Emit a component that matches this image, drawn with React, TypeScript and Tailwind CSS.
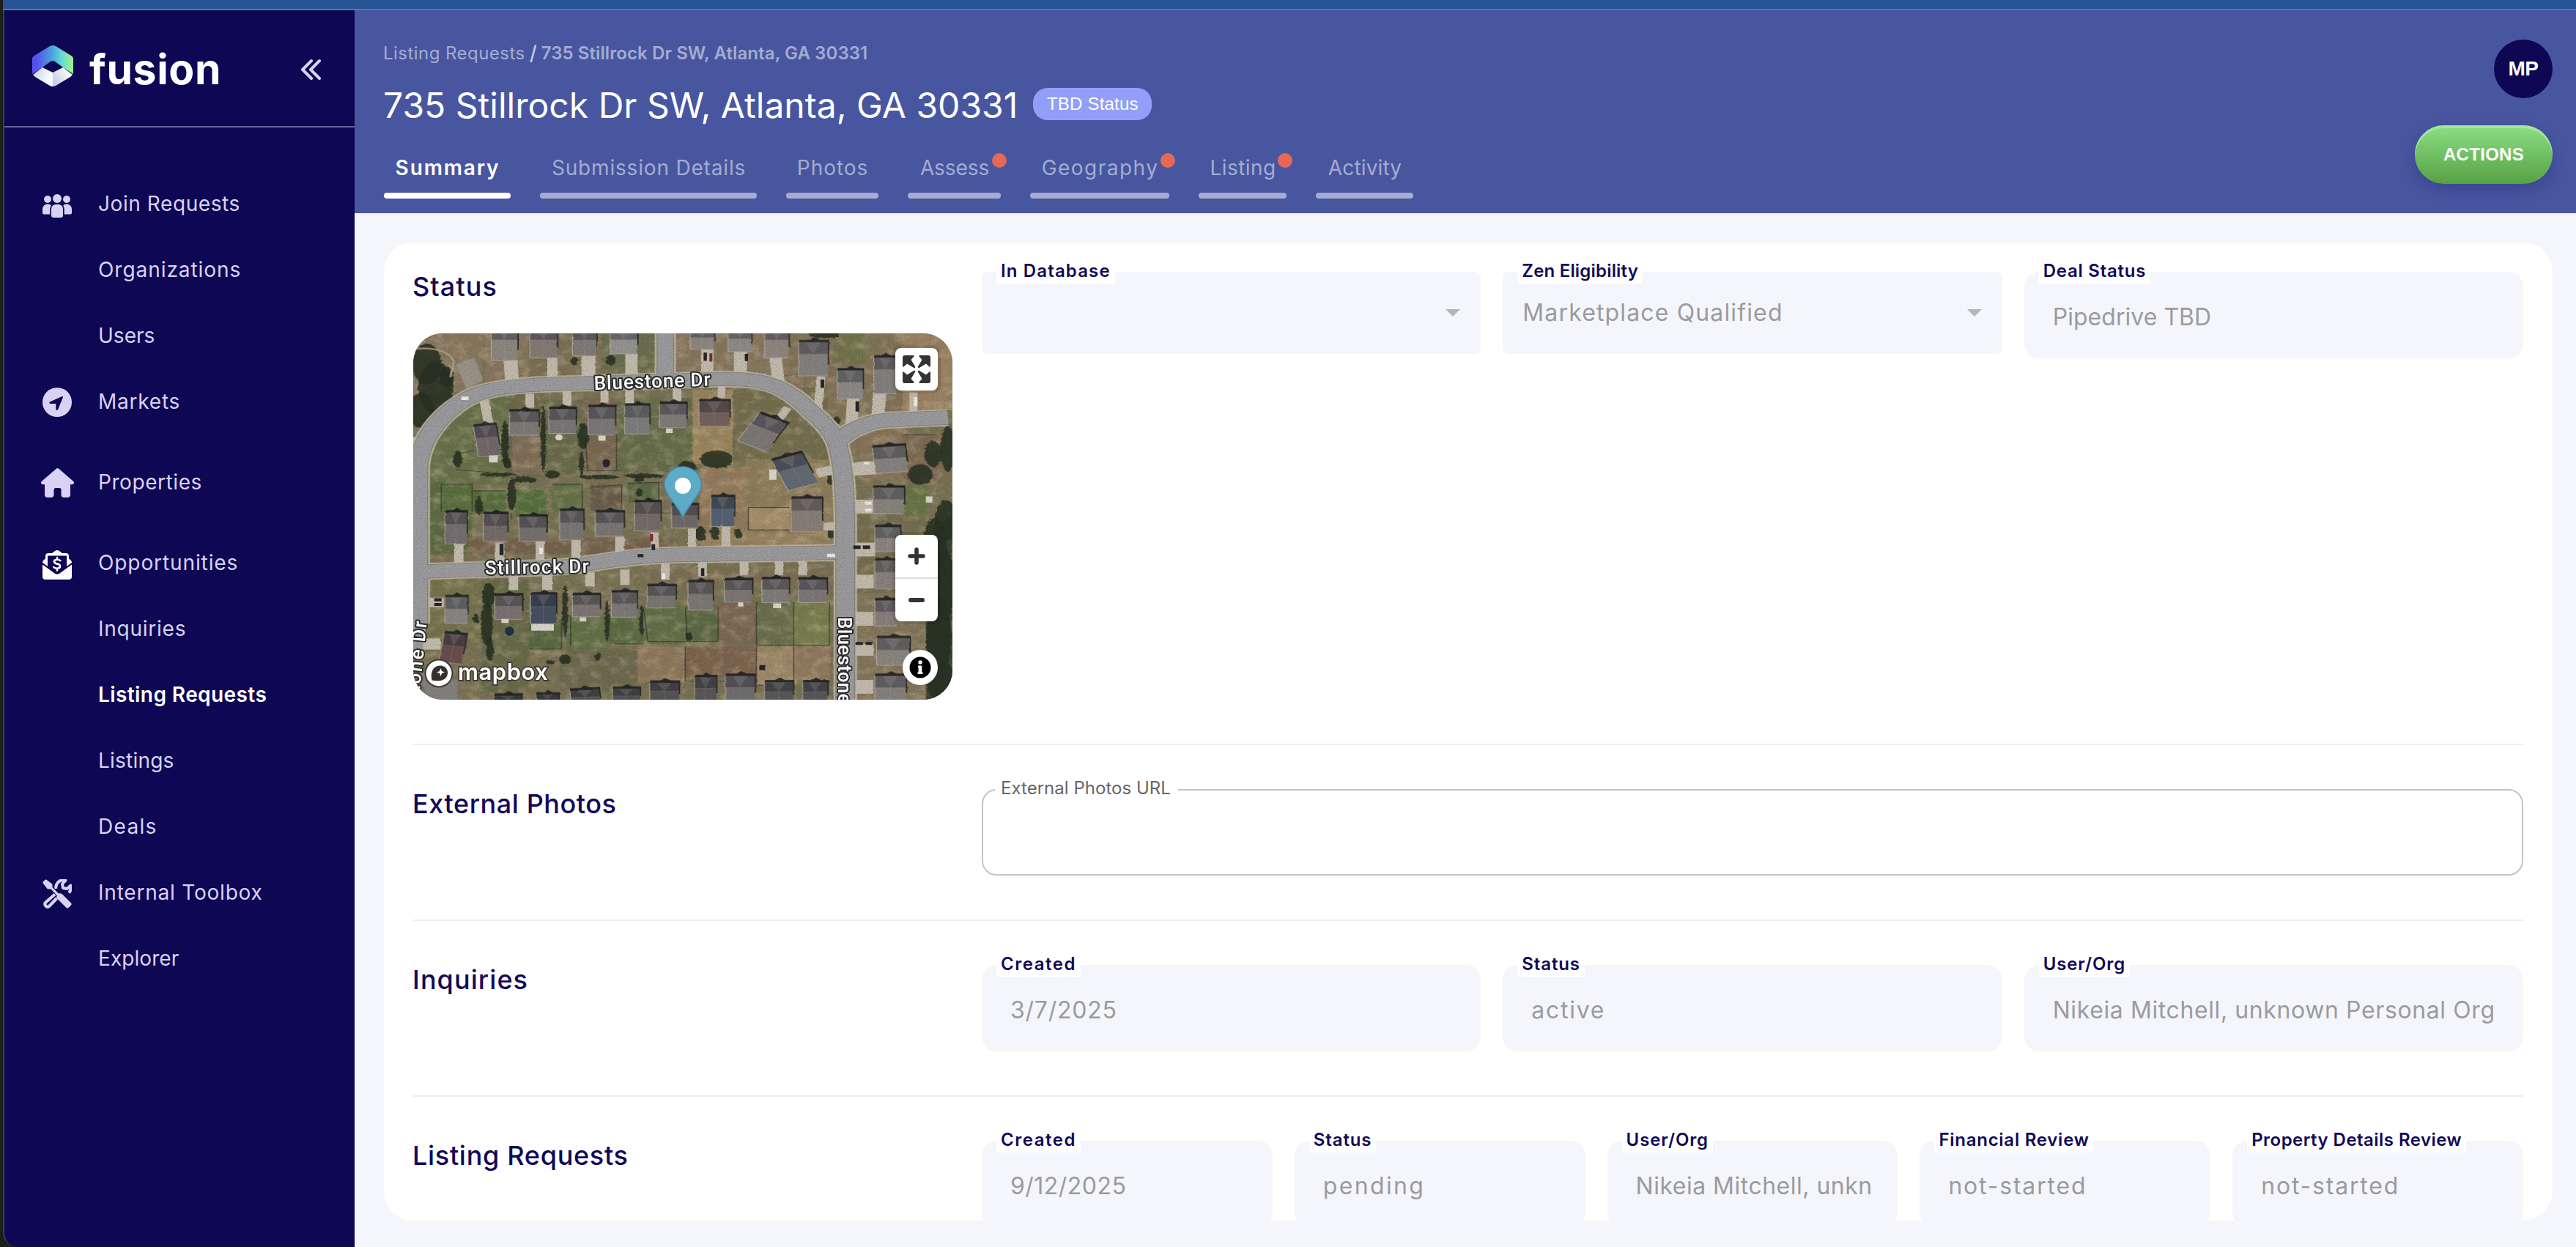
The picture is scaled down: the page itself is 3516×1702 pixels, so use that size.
import type { ReactNode } from "react";

/* ---------- icons ---------- */

function FusionMark() {
  return (
    <svg width="56" height="56" viewBox="0 0 56 56">
      <defs>
        <linearGradient id="fm-top" x1="0" x2="1" y1="0" y2="0">
          <stop offset="0.1" stopColor="#5850ee" />
          <stop offset="0.45" stopColor="#4d9ade" />
          <stop offset="0.7" stopColor="#5fd8dc" />
          <stop offset="0.95" stopColor="#9df08f" />
        </linearGradient>
        <linearGradient id="fm-l" x1="0" x2="1" y1="0" y2="0.5">
          <stop offset="0" stopColor="#c3cce2" />
          <stop offset="0.8" stopColor="#f7f9fd" />
        </linearGradient>
        <linearGradient id="fm-r" x1="0" x2="1" y1="0.6" y2="0">
          <stop offset="0" stopColor="#c6d0e6" />
          <stop offset="0.8" stopColor="#ffffff" />
        </linearGradient>
      </defs>
      <path d="M1 40 14 30 28 37V56q-2 0-4-1L4 43Z" fill="url(#fm-l)" />
      <path d="M55 40 42 30 28 37V56q2 0 4-1L52 43Z" fill="url(#fm-r)" />
      <path
        d="M0 18q0-2 2-3.500L24 1q4-2 8 0l22 13.500q2 1.500 2 3.500V39L42 30 32 22.500q-4-3-8 0L14 30 0 39Z"
        fill="url(#fm-top)"
      />
    </svg>
  );
}

function CollapseIcon() {
  return (
    <svg width="28" height="30" viewBox="0 0 28 30" fill="none" stroke="#d9d2f4" strokeWidth="4" strokeLinecap="round" strokeLinejoin="round">
      <path d="M15 3 3 15l12 12M26 3 14 15l12 12" />
    </svg>
  );
}

function UsersIcon() {
  return (
    <svg width="40" height="32" viewBox="0 0 40 32" fill="#d9d2f4">
      <circle cx="7" cy="7" r="5" />
      <circle cx="33" cy="7" r="5" />
      <circle cx="20" cy="6" r="6" />
      <path d="M7 13.500c2 0 3.600.7 4.800 2C10.600 17.500 10.300 19 10.300 21v6.500H2a2 2 0 0 1-2-2v-5a7 7 0 0 1 7-7ZM33 13.500c-2 0-3.600.7-4.800 2 1.200 2 1.500 3.500 1.500 5.500v6.500H38a2 2 0 0 0 2-2v-5a7 7 0 0 0-7-7Z" />
      <path d="M18 14h4a6 6 0 0 1 6 6v9a3 3 0 0 1-3 3H15a3 3 0 0 1-3-3v-9a6 6 0 0 1 6-6Z" />
    </svg>
  );
}

function MarketsIcon() {
  return (
    <svg width="40" height="40" viewBox="0 0 40 40">
      <circle cx="20" cy="20" r="20" fill="#d9d2f4" />
      <path d="M10 19.500 26.300 12.200q2.200-.8 1.500 1.500L21 30.200q-2.400 2-2.700-.8V22H11q-3-.6-1-2.500Z" fill="#0e0753" />
    </svg>
  );
}

function HomeIcon() {
  return (
    <svg width="45" height="40" viewBox="0 0 45 40">
      <path
        d="M20.800.7q1.700-1.400 3.400 0L44.200 18q1.300 1.300.6 2.800-.6 1.400-2.300 1.400H40V36q0 4-4 4h-4.500q-4 0-4-4v-6.500q0-2.500-2.500-2.500h-5q-2.500 0-2.500 2.500V36q0 4-4 4H9q-4 0-4-4V22.200H2.500Q.8 22.200.2 20.800-.5 19.300.8 18Z"
        fill="#d9d2f4"
      />
    </svg>
  );
}

function EnvelopeIcon() {
  return (
    <svg width="40" height="40" viewBox="0 0 40 40">
      <g fill="#ffffff">
        <path d="M4 8q0-4 4-4h5l4-3q3-2 6 0l4 3h5q4 0 4 4v3.500l2.500 2Q40 15 40 16.500V17l-7 5V8.500q0-1-1-1H8q-1 0-1 1V22l-7-5v-.5Q0 15 1.500 13.500L4 11.500Z" />
        <path d="M0 19.500 16.500 31.500q3.500 2.500 7 0L40 19.500V36q0 4-4 4H4q-4 0-4-4Z" />
      </g>
      <path d="M24.300 14.200q-1.500-1.400-4.300-1.400-4 0-4 2.800 0 2.300 4 3t4 3.200q0 3-4 3-3 0-4.600-1.600M20 10v2.800M20 24.800v2.800" fill="none" stroke="#ffffff" strokeWidth="2.600" strokeLinecap="round" />
    </svg>
  );
}

function ToolsIcon() {
  return (
    <svg width="40" height="40" viewBox="0 0 40 40">
      <path d="M17 20.500 4.500 31.500q-2.500 2.500 0 5t5 0L20 25.500" fill="none" stroke="#d9d2f4" strokeWidth="4.200" />
      <path d="M18.500 13q-1-5 3-9t10-2.300L27 6.500l1 5.500 5.500 1 5-4.500q1.500 6-2.500 10" fill="none" stroke="#d9d2f4" strokeWidth="4" strokeLinejoin="round" />
      <path
        d="M5.500.7 12.500 6q1 .8 1 2v3.200l8.300 8.300q3-1 5 .8L38.600 32q2 2 0 4l-2.500 2.500q-2 2-4 0L20.500 27q-1.900-2.200-.8-5L11.400 13.600H8q-1.300 0-2-1L.7 5.500Q0 4.300.9 3.300L3.300.9Q4.300 0 5.500.7Z"
        fill="#d9d2f4"
        stroke="#0e0753"
        strokeWidth="1"
        paintOrder="stroke"
      />
    </svg>
  );
}

/* ---------- sidebar ---------- */

type NavItem = { label: string; cls: string; icon?: ReactNode; iconCls?: string };

const NAV: NavItem[] = [
  { label: "Join Requests", cls: "tracking-[0.58px]", icon: <UsersIcon />, iconCls: "pt-[5px]" },
  { label: "Organizations", cls: "tracking-[0.95px]" },
  { label: "Users", cls: "tracking-[0.03px]" },
  { label: "Markets", cls: "tracking-[0.77px]", icon: <MarketsIcon />, iconCls: "pt-[2px]" },
  { label: "Properties", cls: "mt-5 tracking-[0.57px]", icon: <HomeIcon />, iconCls: "pt-[2px]" },
  { label: "Opportunities", cls: "mt-5 tracking-[0.9px]", icon: <EnvelopeIcon />, iconCls: "pt-[5px]" },
  { label: "Inquiries", cls: "tracking-[0.75px]" },
  { label: "Listing Requests", cls: "font-semibold text-white tracking-[0.42px]" },
  { label: "Listings", cls: "tracking-[0.22px]" },
  { label: "Deals", cls: "tracking-[1.32px]" },
  { label: "Internal Toolbox", cls: "tracking-[0.79px]", icon: <ToolsIcon />, iconCls: "pt-[3px]" },
  { label: "Explorer", cls: "tracking-[0.07px]" },
];

function Sidebar() {
  return (
    <aside className="flex w-[480px] shrink-0 flex-col rounded-bl-[20px] border-l-2 border-[#3d3770] bg-[#0e0753]">
      <div className="flex h-[160px] items-center border-b-2 border-[#69659a] pl-[38px] pr-[46px]">
        <div className="pb-[6px]">
          <FusionMark />
        </div>
        <span className="ml-[22px] pt-1 text-[57px] leading-[64px] font-bold tracking-[0.7px] text-white">fusion</span>
        <span className="ml-auto pt-[4px]">
          <CollapseIcon />
        </span>
      </div>
      <nav className="flex flex-col pt-[59px] text-[28px] text-[#d9d2f4]">
        {NAV.map((n) => (
          <div key={n.label} className={`flex h-[90px] items-center ${n.cls}`}>
            <div className={`ml-[46px] mr-[30px] flex w-[52px] justify-center ${n.iconCls ?? ""}`}>{n.icon}</div>
            <span>{n.label}</span>
          </div>
        ))}
      </nav>
    </aside>
  );
}

/* ---------- header ---------- */

const TABS = [
  { label: "Summary", cls: "w-[173px] tracking-[1.84px] font-semibold text-white", active: true, dot: false },
  { label: "Submission Details", cls: "w-[296px] tracking-[0.82px]", active: false, dot: false },
  { label: "Photos", cls: "w-[126px] tracking-[0.94px]", active: false, dot: false },
  { label: "Assess", cls: "w-[127px] tracking-[-0.09px]", active: false, dot: true },
  { label: "Geography", cls: "w-[190px] tracking-[1.47px]", active: false, dot: true },
  { label: "Listing", cls: "w-[120px] tracking-[0.45px]", active: false, dot: true },
  { label: "Activity", cls: "w-[133px] tracking-[0.14px]", active: false, dot: false },
];

function Header() {
  return (
    <header className="flex h-[277px] justify-between bg-[#4856a0] pl-[40px] pr-8">
      <div className="pt-[41px]">
        <div className="-ml-px flex h-9 items-center whitespace-pre text-[24px] text-[#a4acd0]">
          <span className="tracking-[0.46px]">Listing Requests</span>
          <span className="ml-[6px] text-[27px] leading-9 font-medium text-[#c3c9e2]">/</span>
          <span className="ml-[6px] font-semibold tracking-[0.09px]">735 Stillrock Dr SW, Atlanta, GA 30331</span>
        </div>
        <div className="-ml-px mt-[17px] flex h-[72px] items-center">
          <h1 className="text-[48px] leading-[72px] tracking-[0.02px] text-white">735 Stillrock Dr SW, Atlanta, GA 30331</h1>
          <span className="mb-[5px] ml-[21px] flex h-[44px] w-[162px] items-center justify-center rounded-[20px] bg-[#929ef7] font-['Liberation_Sans',sans-serif] text-[24px] tracking-[0.2px] text-white">
            TBD Status
          </span>
        </div>
        <div className="mt-[29px] flex gap-10 text-[28px] text-[#a4acd0]">
          {TABS.map((t) => (
            <div key={t.label} className={`relative flex flex-col ${t.cls}`}>
              <span className="h-10 pl-px text-center leading-10">{t.label}</span>
              <span className={`mt-[14px] h-2 rounded-full ${t.active ? "bg-white" : "bg-[#a4acd0]"}`} />
              {t.dot && <span className="absolute -right-2 top-0 size-5 rounded-full bg-[#e36a57]" />}
            </div>
          ))}
        </div>
      </div>
      <div className="flex flex-col items-end pt-10 font-['Liberation_Sans',sans-serif] font-bold text-white">
        <div className="flex size-20 items-center justify-center rounded-full bg-[#0e0753] text-[28px] tracking-[-0.5px]">MP</div>
        <button className="mt-[37px] flex h-20 w-[188px] items-center justify-center rounded-full bg-gradient-to-b from-[#8bdf84] to-[#58a144] text-[24px] tracking-[0.3px] shadow-[inset_0_4px_0_#a6e49c,0_8px_20px_rgba(14,7,83,0.22)]">
          ACTIONS
        </button>
      </div>
    </header>
  );
}

/* ---------- map ---------- */

type House = [number, number, number, number, string?, number?];

const HOUSES: House[] = [
  [262, 50, 72, 125, "#8d867f"], [368, 50, 75, 115, "#847a74"], [485, 50, 66, 108, "#827a76"], [588, 50, 75, 100, "#93928e"],
  [808, 50, 66, 82, "#8d867f"], [912, 50, 64, 92, "#8d8984"], [1012, 50, 66, 115, "#8d867f"], [1106, 105, 80, 130, "#837f7d"],
  [1212, 215, 70, 110, "#8b8885"], [1312, 165, 62, 140, "#847f7c"],
  [312, 375, 80, 92, "#7e7977"], [420, 365, 74, 95, "#7a7674"], [528, 358, 74, 108, "#7b7776"], [628, 352, 68, 110, "#7d7e7b"],
  [724, 345, 74, 92, "#7e7a78"], [832, 335, 84, 97, "#75615c"], [220, 430, 62, 118, "#736769", -7],
  [962, 395, 88, 122, "#7b7776", 29], [1052, 548, 88, 124, "#646972", -21],
  [1312, 512, 90, 100, "#85817f", -5], [1310, 672, 85, 100, "#87827c"], [1315, 825, 70, 95, "#8a8581"], [1315, 955, 60, 110, "#87807c"],
  [1315, 1110, 60, 100, "#867f7b"], [1320, 1258, 90, 105, "#8a847f"], [1315, 1405, 85, 100, "#86807c"],
  [135, 768, 60, 122, "#746d6f"], [240, 775, 66, 105, "#736b69"], [338, 785, 76, 95, "#756f6e"], [450, 762, 65, 112, "#797472"],
  [548, 768, 78, 92, "#797473"], [655, 728, 72, 112, "#766b67"], [757, 740, 72, 88, "#6e6968"], [865, 708, 64, 114, "#556070"],
  [1085, 715, 85, 128, "#897d78"],
  [135, 1098, 62, 102, "#878583"], [272, 1092, 75, 92, "#7a7270"], [370, 1088, 70, 112, "#475061"], [485, 1090, 75, 84, "#7d7572"],
  [592, 1080, 70, 96, "#7d7875"], [690, 1055, 78, 84, "#7a7471"], [802, 1040, 68, 108, "#7d7772"], [902, 1032, 76, 85, "#7c7673"],
  [1005, 1028, 74, 90, "#7e7a77"], [1105, 1030, 78, 88, "#7c7776"], [125, 1242, 62, 112, "#694e4c", 8],
  [270, 1482, 75, 40, "#444343"], [385, 1478, 62, 40, "#444343"], [480, 1460, 80, 60, "#555351", -4], [595, 1455, 75, 60, "#525151"],
  [697, 1432, 80, 70, "#555353"], [820, 1410, 60, 95, "#585656"], [905, 1405, 80, 100, "#706d6d"], [1012, 1430, 78, 80, "#585858"],
  [1117, 1430, 68, 80, "#585657"],
];

/* lots: x, y, width, height, ground colour */
const LOTS: [number, number, number, number, string][] = [
  [48, 70, 190, 250, "#89785f"], [245, 70, 120, 190, "#88765f"], [365, 70, 200, 190, "#7c7155"], [565, 70, 150, 140, "#6a6e4d"],
  [760, 70, 350, 160, "#87775d"], [1080, 70, 330, 380, "#817358"], [1200, 70, 90, 120, "#73734c"], [1390, 70, 140, 300, "#9a8164"],
  [90, 300, 215, 360, "#676f48"], [305, 300, 100, 330, "#6c674a"], [320, 470, 85, 150, "#806d57"], [405, 330, 110, 290, "#696a4b"],
  [515, 320, 95, 290, "#7a6751"], [608, 320, 215, 290, "#666c48"], [815, 290, 115, 290, "#9c865f"], [925, 280, 260, 300, "#736d4e"],
  [960, 560, 250, 340, "#8e7d5a"], [835, 590, 130, 310, "#937a5b"],
  [90, 650, 120, 280, "#5b6940"], [125, 655, 85, 110, "#586e3d"], [212, 680, 90, 90, "#576c3c"], [330, 680, 85, 105, "#566e3d"],
  [428, 655, 85, 110, "#657046"], [535, 660, 85, 100, "#685b48"], [637, 650, 85, 80, "#5c6842"], [200, 870, 560, 60, "#75624d"],
  [968, 750, 112, 85, "#a48e69"], [840, 850, 370, 55, "#998360"],
  [85, 1030, 150, 250, "#74724d"], [235, 1030, 130, 440, "#676b4a"], [365, 1180, 90, 120, "#586a42"], [470, 1170, 110, 130, "#626f46"],
  [585, 1170, 95, 110, "#5a6a43"], [680, 1130, 115, 150, "#626e46"], [795, 1130, 90, 140, "#5b6744"], [885, 1110, 105, 170, "#7a6852"],
  [990, 1110, 100, 175, "#6b6e4d"], [1092, 1110, 100, 175, "#787e50"], [665, 1290, 130, 140, "#8f785b"], [795, 1290, 195, 120, "#7b634e"],
  [990, 1290, 110, 150, "#a0896a"], [1092, 1290, 100, 130, "#917a5f"], [450, 1300, 210, 160, "#6d694d"], [700, 985, 510, 60, "#7c6e53"],
  [1270, 440, 130, 200, "#867359"], [1390, 465, 110, 200, "#7e6a51"], [1390, 660, 70, 180, "#687344"], [1260, 780, 200, 300, "#746d50"],
  [1260, 1080, 200, 420, "#83745a"],
];

const DRIVES: [number, number, number, number, number?][] = [
  [298, 176, 38, 82, -3], [416, 165, 28, 85], [510, 158, 38, 92], [630, 150, 34, 90], [838, 132, 34, 88], [928, 140, 36, 90],
  [1030, 165, 34, 110, -5], [1150, 238, 24, 160, 4], [1236, 320, 34, 120, 3], [1308, 300, 36, 95, 3], [1410, 300, 22, 80],
  [236, 330, 26, 95, -8], [356, 305, 24, 55], [458, 292, 24, 60], [562, 290, 22, 50], [630, 285, 24, 62], [760, 280, 24, 55], [884, 265, 20, 55],
  [160, 890, 26, 80], [272, 885, 26, 80], [384, 880, 24, 75], [482, 875, 26, 78], [602, 862, 26, 80], [700, 845, 22, 80], [802, 830, 22, 82],
  [894, 822, 24, 85], [1240, 570, 78, 52, -4], [1250, 718, 60, 54], [1256, 885, 60, 54], [1252, 1010, 60, 54], [1256, 1155, 55, 54],
  [1256, 1280, 55, 46], [1256, 1420, 55, 54], [1155, 590, 48, 36, -18], [1174, 806, 50, 32], [1050, 355, 24, 60, 28],
  [310, 1010, 26, 60], [402, 1010, 28, 60], [520, 1000, 26, 55], [616, 990, 26, 60], [728, 965, 24, 65], [830, 955, 24, 62],
  [944, 950, 24, 62], [1040, 950, 24, 62], [1105, 950, 24, 62], [70, 1100, 62, 36], [60, 1258, 62, 44], [48, 475, 28, 36],
];

const TREES: [number, number, number, number][] = [
  [85, 190, 40, 80], [110, 280, 48, 100], [70, 370, 34, 70], [140, 240, 20, 40], [880, 560, 45, 34], [800, 590, 24, 22],
  [515, 470, 16, 50], [405, 480, 7, 130], [510, 580, 7, 50], [300, 500, 10, 90], [318, 700, 12, 60], [430, 620, 20, 16], [350, 640, 36, 12],
  [560, 630, 55, 9], [680, 625, 55, 9], [228, 740, 10, 36], [170, 560, 13, 32], [306, 575, 11, 22], [280, 620, 50, 7],
  [255, 1090, 18, 46], [250, 1200, 16, 85], [258, 1300, 10, 46], [465, 1150, 8, 100], [580, 1190, 7, 80], [675, 1190, 6, 60],
  [1480, 900, 34, 110], [1500, 1050, 34, 150], [1490, 1250, 34, 170], [1500, 1430, 40, 80], [1475, 540, 24, 50], [1440, 620, 34, 40],
  [1515, 520, 20, 90], [1510, 800, 30, 80], [836, 850, 14, 30], [876, 848, 12, 26], [940, 850, 9, 20], [1195, 640, 13, 20], [1195, 850, 11, 20],
  [465, 1340, 16, 20], [555, 1330, 10, 16], [425, 1352, 12, 8], [220, 1180, 9, 18], [590, 175, 14, 20], [490, 178, 11, 16], [1175, 75, 40, 14],
  [805, 1250, 9, 18], [1210, 410, 11, 16], [668, 690, 10, 16], [668, 638, 14, 14],
];

const FENCES =
  "M125 658H210V765M125 658V765M212 684H302M430 658H512V755M535 670 620 660V755M637 655 722 650V730M968 748H1080M968 748V836H1080M680 1140 692 1270H795M795 1140 800 1270H885V1140M990 1118V1285H1092V1118M1092 1285H1190V1118M795 1290V1425H990V1290M990 1440H1092M368 1300H455V1185M480 1170V1285M600 1280H678M168 540 215 525M165 600 300 618M520 470 527 605H606V465M730 770H752M318 795V770M200 775H212M1388 465H1480M1092 1290V1440";

const ROAD_LEFT = "M62 1200V600C62 470 150 330 250 295C330 265 450 268 560 262L900 248C1010 246 1060 275 1110 335C1160 400 1195 440 1212 500C1232 600 1232 700 1234 800V1500";
const ROAD_MID = "M50 1000C250 985 420 990 520 970C640 940 720 932 820 932L1225 924";
const ROAD_TOP = "M740 60V240";
const ROAD_RIGHT = "M1205 500C1240 450 1290 415 1350 408L1515 398";

function HouseShape({ h }: { h: House }) {
  const [x, y, w, d, fill = "#7d7875", rot = 0] = h;
  const t = Math.min(d * 0.45, 46);
  return (
    <g transform={`rotate(${rot} ${x + w / 2} ${y + d / 2})`}>
      <path d={`M${x + 2} ${y - 10}h${w * 0.35}l${w * 0.15} -9l${w * 0.2} 9h${w * 0.32}v${d * 0.75}h-8V${y}H${x}Z`} fill="#191a1f" opacity="0.85" />
      <rect x={x} y={y} width={w} height={d} fill={fill} />
      <rect x={x} y={y} width={w} height={t} fill="#22252d" opacity="0.38" />
      <path d={`M${x + w * 0.25} ${y}L${x + w * 0.5} ${y + t}L${x + w * 0.75} ${y}Z`} fill="#a7a6a3" opacity="0.22" />
      <path d={`M${x} ${y + t}H${x + w}M${x + w / 2} ${y + t}V${y + d}`} stroke="#b1aba4" strokeWidth="1.500" opacity="0.35" />
      <path d={`M${x} ${y}V${y + d}H${x + w}`} fill="none" stroke="#cbc5bb" strokeWidth="2.500" opacity="0.6" />
    </g>
  );
}

function Satellite() {
  return (
    <svg className="block" width="736" height="500" viewBox="48 70 1480 1427" preserveAspectRatio="none">
      <defs>
        <filter id="rough" x="0" y="0" width="1" height="1">
          <feTurbulence type="fractalNoise" baseFrequency="0.09" numOctaves="3" seed="4" />
          <feDisplacementMap in="SourceGraphic" scale="12" />
        </filter>
        <filter id="rough2" x="0" y="0" width="1" height="1">
          <feTurbulence type="fractalNoise" baseFrequency="0.06" numOctaves="2" seed="8" />
          <feDisplacementMap in="SourceGraphic" scale="5" />
        </filter>
        <filter id="blotch" x="0" y="0" width="1" height="1">
          <feTurbulence type="fractalNoise" baseFrequency="0.022" numOctaves="4" seed="11" />
          <feColorMatrix values="0 0 0 0 0.16  0 0 0 0 0.17  0 0 0 0 0.1  1.6 0 0 0 -0.78" />
        </filter>
        <filter id="warm" x="0" y="0" width="1" height="1">
          <feTurbulence type="fractalNoise" baseFrequency="0.03" numOctaves="4" seed="29" />
          <feColorMatrix values="0 0 0 0 0.72  0 0 0 0 0.6  0 0 0 0 0.42  0 1.6 0 0 -0.74" />
        </filter>
        <filter id="grain" x="0" y="0" width="1" height="1">
          <feTurbulence type="fractalNoise" baseFrequency="0.3" numOctaves="2" seed="3" />
          <feColorMatrix values="0 0 0 0 0  0 0 0 0 0  0 0 0 0 0  1.5 0 0 0 -0.72" />
        </filter>
      </defs>
      <rect x="48" y="70" width="1480" height="1427" fill="#797154" />
      <g filter="url(#rough)">
        {LOTS.map(([x, y, w, h, c], i) => (
          <rect key={i} x={x} y={y} width={w} height={h} fill={c} />
        ))}
      </g>
      <rect x="48" y="70" width="1480" height="1427" filter="url(#warm)" opacity="0.5" />
      <rect x="48" y="70" width="1480" height="1427" filter="url(#blotch)" opacity="0.55" />
      <g filter="url(#rough)" fill="#262f22">
        {TREES.map(([x, y, rx, ry], i) => (
          <ellipse key={i} cx={x} cy={y} rx={rx} ry={ry} opacity="0.85" />
        ))}
      </g>
      <path d="M1480 820L1528 780V1497H1455V1000Z" fill="#2a3028" opacity="0.75" filter="url(#rough)" />
      <path d="M165 190L215 165L240 250L195 290Z" fill="#989288" />
      <path d="M55 130Q140 120 160 180L150 240" fill="none" stroke="#ad9f86" strokeWidth="6" />
      <path d="M60 1390L170 1420V1500H90Z" fill="#83807c" />
      <g fill="none" stroke="#bdb5a3">
        <path d={ROAD_LEFT} strokeWidth="64" />
        <path d="M62 1190 58 1320" strokeWidth="40" />
        <path d={ROAD_MID} strokeWidth="66" />
        <path d={ROAD_TOP} strokeWidth="58" />
        <path d={ROAD_RIGHT} strokeWidth="66" />
      </g>
      <g filter="url(#rough2)">
        {DRIVES.map(([x, y, w, h, r = 0], i) => (
          <rect key={i} x={x} y={y} width={w} height={h} fill="#c1b9ab" transform={`rotate(${r} ${x + w / 2} ${y + h / 2})`} />
        ))}
      </g>
      <g stroke="#7d756a" fill="none">
        <path d={ROAD_LEFT} strokeWidth="54" />
        <path d={ROAD_MID} strokeWidth="56" />
        <path d={ROAD_TOP} strokeWidth="48" />
        <path d={ROAD_RIGHT} strokeWidth="56" />
      </g>
      <g stroke="#9a9a9c" fill="none">
        <path d={ROAD_LEFT} strokeWidth="50" />
        <path d="M62 1190 58 1320" strokeWidth="32" />
        <path d={ROAD_MID} strokeWidth="52" />
        <path d={ROAD_TOP} strokeWidth="44" />
        <path d={ROAD_RIGHT} strokeWidth="52" />
      </g>
      <path d={FENCES} fill="none" stroke="#2a2822" strokeWidth="2.500" opacity="0.75" />
      <g filter="url(#rough2)">
        {HOUSES.map((h, i) => (
          <HouseShape key={i} h={h} />
        ))}
      </g>
      <g fill="#d8d4cb">
        <ellipse cx="448" cy="475" rx="10" ry="12" />
        <path d="M556 468h20v20h-20zM256 545h24v28h-24zM742 440h18v18h-18zM372 1202h62v26h-62zM1455 705h18v24h-18zM1036 1122h22v18h-22zM505 1176h18v16h-18zM290 1182h20v16h-20zM940 1118h14v16h-14zM1025 600h20v40h-20z" />
      </g>
      <g fill="#24262c">
        <ellipse cx="578" cy="576" rx="10" ry="16" />
        <ellipse cx="312" cy="1230" rx="12" ry="18" fill="#1f3142" />
        <path d="M1256 896h20v14h-20zM1282 896h20v14h-20zM106 1102h20v12h-20zM106 1120h20v12h-20zM285 890h11v44h-11zM702 892h10v22h-10zM1166 250h10v32h-10zM1262 335h10v40h-10zM838 985h9v30h-9zM664 930h16v12h-16zM1262 1272h20v12h-20zM1290 1272h18v12h-18zM845 145h9v32h-9zM958 150h9v28h-9zM998 1362h16v20h-16z" />
      </g>
      <path d="M861 148h8v32h-8zM698 852h8v28h-8z" fill="#7c2f2b" />
      <path d="M1422 318h10v36h-10zM394 905h10v24h-10zM1184 928h22v14h-22zM180 316h20v14h-20zM1288 725h18v12h-18zM1288 752h18v12h-18zM730 1005h10v22h-10zM1284 570h16v10h-16z" fill="#e8e8e6" />
      <rect x="48" y="70" width="1480" height="1427" filter="url(#grain)" opacity="0.3" />
    </svg>
  );
}

function MapOverlay() {
  return (
    <svg className="absolute inset-0" width="736" height="500" viewBox="0 0 736 500">
      <g fill="#ffffff" stroke="#2b2b2b" strokeWidth="4" paintOrder="stroke" strokeLinejoin="round" fontFamily="Roboto, sans-serif" fontWeight="500" fontSize="26">
        <text transform="translate(247 77) rotate(-2)" textLength="159">Bluestone Dr</text>
        <text transform="translate(98 329) rotate(-1)" textLength="142">Stillrock Dr</text>
        <text transform="translate(580 387) rotate(90)" textLength="152">Bluestone Dr</text>
        <text transform="translate(7 505) rotate(-84)" textLength="112">stone Dr</text>
      </g>
      <path d="M368 252C364 237 343 221 343 207a25 25 0 0 1 50 0c0 14-21 30-25 45Z" fill="#5eaac9" stroke="#4290ae" strokeWidth="1.500" />
      <circle cx="368" cy="208" r="11" fill="#ffffff" />
      <circle cx="35" cy="464" r="18.500" fill="#ffffff" stroke="#3d3a36" strokeWidth="2" />
      <path d="M25.500 473.500C23 463 27 453.500 36.500 453.500C46.500 453.500 49.500 463 45 469.500C40.500 475 33 475 25.500 473.500Z" fill="#34302c" />
      <path d="M37.500 457l1.500 4 4 1.500-4 1.500-1.500 4-1.500-4-4-1.500 4-1.500Z" fill="#ffffff" />
      <text x="61" y="473" textLength="123" fontFamily="Inter, sans-serif" fontWeight="600" fontSize="31" fill="#ffffff" stroke="#3d3a36" strokeWidth="3.500" paintOrder="stroke">
        mapbox
      </text>
    </svg>
  );
}

function MapCard() {
  return (
    <div className="relative h-[500px] w-[736px] overflow-hidden rounded-[40px]">
      <Satellite />
      <MapOverlay />
      <div className="absolute right-5 top-5 flex size-[58px] items-center justify-center rounded-lg bg-white shadow-[0_0_0_4px_rgba(0,0,0,0.1)]">
        <svg width="38" height="38" viewBox="0 0 38 38" fill="#333333">
          {[0, 90, 180, 270].map((a) => (
            <path key={a} transform={`rotate(${a} 19 19)`} d="M0 3q0-3 3-3h12q1 .5.500 1.500L11.500 6 17.500 16 16 17.500 6 11.500 1.500 15.500Q.5 16 0 15Z" />
          ))}
        </svg>
      </div>
      <div className="absolute bottom-[107px] right-5 flex w-[58px] flex-col overflow-hidden rounded-lg bg-white shadow-[0_0_0_4px_rgba(0,0,0,0.1)]">
        <div className="flex h-[60px] items-center justify-center border-b-2 border-[#dddddd]">
          <svg width="24" height="24" viewBox="0 0 24 24" stroke="#333333" strokeWidth="5.500" strokeLinecap="round">
            <path d="M12 3v18M3 12h18" />
          </svg>
        </div>
        <div className="flex h-[58px] items-center justify-center">
          <svg width="24" height="24" viewBox="0 0 24 24" stroke="#333333" strokeWidth="6" strokeLinecap="round">
            <path d="M4 12h16" />
          </svg>
        </div>
      </div>
      <div className="absolute bottom-5 right-5 flex size-12 items-center justify-center rounded-full bg-white">
        <svg width="30" height="30" viewBox="0 0 30 30">
          <circle cx="15" cy="15" r="14.500" fill="#000000" />
          <g fill="#ffffff">
            <circle cx="15" cy="8" r="2.700" />
            <path d="M12 12.500h5.300v9H18.500v2.500h-7v-2.500H12.600V15H12Z" />
          </g>
        </svg>
      </div>
    </div>
  );
}

/* ---------- form ---------- */

function FieldLabel({ text, cls }: { text: string; cls: string }) {
  return (
    <span className={`absolute -top-[18px] left-5 h-[34px] whitespace-nowrap bg-white px-[6px] text-[24px] leading-[34px] font-semibold text-[#110958] ${cls}`}>
      {text}
    </span>
  );
}

type FieldProps = { label: string; labelCls: string; value: string; valueCls?: string };

function Field({ label, labelCls, value, valueCls = "" }: FieldProps) {
  return (
    <div className="relative flex h-[118px] min-w-0 items-center rounded-[20px] bg-[#f5f6fc] pl-[39px] pt-[6px]">
      <FieldLabel text={label} cls={labelCls} />
      <span className={`whitespace-nowrap text-[32px] leading-[46px] text-[#9b9b9e] ${valueCls}`}>{value}</span>
    </div>
  );
}

function SelectField({ label, labelCls, value, valueCls = "" }: FieldProps) {
  return (
    <div className="relative flex h-[112px] min-w-0 items-center justify-between rounded-lg bg-[#f5f6fc] pl-[27px] pr-[28px]">
      <FieldLabel text={label} cls={labelCls} />
      <span className={`text-[32px] leading-[46px] text-[#9b9b9e] ${valueCls}`}>{value}</span>
      <svg width="20" height="10" viewBox="0 0 20 10">
        <path d="M0 0h20L10 10Z" fill="#b5b6bb" />
      </svg>
    </div>
  );
}

function Section({ title, titleCls, first, left, children }: { title: string; titleCls: string; first?: boolean; left?: ReactNode; children: ReactNode }) {
  return (
    <section className={`flex ${first ? "pb-[60px]" : "border-t-2 border-[#ebedf6] py-[60px]"}`}>
      <div className="flex w-[776px] shrink-0 flex-col">
        <h2 className={`-ml-px text-[36px] leading-10 font-medium text-[#110958] ${titleCls}`}>{title}</h2>
        {left}
      </div>
      {children}
    </section>
  );
}

export default function App() {
  return (
    <div className="flex h-[1702px] w-[3516px] flex-col overflow-hidden bg-[#1b2019] font-['Inter',sans-serif]">
      <div className="ml-1 h-[14px] shrink-0 border-b-2 border-[#507aab] bg-[#255394]" />
      <div className="ml-1 flex min-h-0 grow">
        <Sidebar />
        <main className="flex min-w-0 grow flex-col bg-[#f5f6fc]">
          <Header />
          <div className="mx-10 mr-8 mt-10 h-[1335px] overflow-hidden rounded-[40px] bg-white px-10 pt-10">
            <Section
              first
              title="Status"
              titleCls="tracking-[1.09px]"
              left={
                <div className="mt-11">
                  <MapCard />
                </div>
              }
            >
              <div className="grid h-[118px] grow grid-cols-3 items-start gap-[30px]">
                <SelectField label="In Database" labelCls="tracking-[1.14px]" value="" />
                <SelectField label="Zen Eligibility" labelCls="tracking-[0.19px]" value="Marketplace Qualified" valueCls="tracking-[1.14px]" />
                <Field label="Deal Status" labelCls="tracking-[0.75px]" value="Pipedrive TBD" valueCls="tracking-[0.04px]" />
              </div>
            </Section>

            <Section title="External Photos" titleCls="tracking-[0.56px]">
              <div className="relative h-[118px] grow rounded-[20px] border-2 border-[#c4c4c4]">
                <span className="absolute -top-[20px] left-4 h-[34px] bg-white pl-2 pr-[10px] text-[24px] leading-[34px] tracking-[0.02px] text-[#666666]">
                  External Photos URL
                </span>
              </div>
            </Section>

            <Section title="Inquiries" titleCls="tracking-[1.07px]">
              <div className="grid grow grid-cols-3 gap-[30px]">
                <Field label="Created" labelCls="tracking-[1.53px]" value="3/7/2025" valueCls="tracking-[0.76px]" />
                <Field label="Status" labelCls="tracking-[0.87px]" value="active" valueCls="tracking-[1.73px]" />
                <Field label="User/Org" labelCls="tracking-[0.88px]" value="Nikeia Mitchell, unknown Personal Org" valueCls="tracking-[0.6px]" />
              </div>
            </Section>

            <Section title="Listing Requests" titleCls="tracking-[0.7px]">
              <div className="grid grow grid-cols-5 gap-[30px]">
                <Field label="Created" labelCls="tracking-[1.53px]" value="9/12/2025" valueCls="tracking-[0.48px]" />
                <Field label="Status" labelCls="tracking-[0.87px]" value="pending" valueCls="tracking-[2.35px]" />
                <Field label="User/Org" labelCls="tracking-[0.88px]" value="Nikeia Mitchell, unkn" valueCls="tracking-[0.49px]" />
                <Field label="Financial Review" labelCls="tracking-[0.74px]" value="not-started" valueCls="tracking-[1.8px]" />
                <Field label="Property Details Review" labelCls="tracking-[0.45px]" value="not-started" valueCls="tracking-[1.8px]" />
              </div>
            </Section>
          </div>
        </main>
      </div>
    </div>
  );
}
